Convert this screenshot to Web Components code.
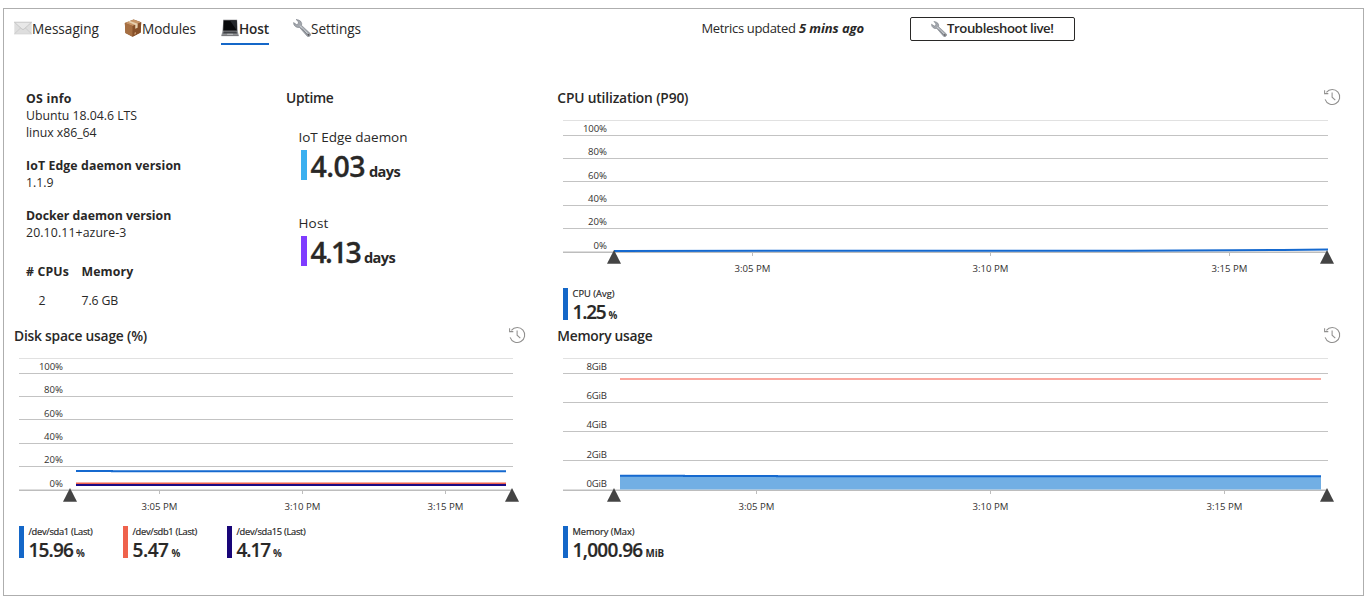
<!DOCTYPE html>
<html lang="en">
<head>
<meta charset="utf-8">
<title>Device details</title>
<style>
html,body{margin:0;background:#fff;overflow:hidden}
body{font-family:"Open Sans","Noto Sans",sans-serif;color:#292827}
</style>
</head>
<body>
<device-page></device-page>

<script>
const define = (name, html, setup) => {
  const t = document.createElement('template');
  t.innerHTML = html;
  customElements.define(name, class extends HTMLElement {
    constructor() {
      super();
      this.attachShadow({ mode: 'open' }).append(t.content.cloneNode(true));
    }
    connectedCallback() { if (setup) setup(this, this.shadowRoot); }
  });
};

// A single-line label tracked so that its text spans the width given in "w".
define('fit-text', `<style>
:host{display:inline-block;white-space:nowrap;flex:none}
span{display:inline-block}
</style><span><slot></slot></span>`, (el, root) => {
  const w = parseFloat(el.getAttribute('w'));
  const span = root.querySelector('span');
  const n = el.textContent.length;
  span.style.letterSpacing = ((w - span.getBoundingClientRect().width) / n).toFixed(3) + 'px';
  el.style.width = w + 'px';
});

const ICONS = {
  mail: `<rect x=".3" y="3" width="17.4" height="12" rx=".6" fill="#dedede"/><path d="M.6 14.7 7 8.6M17.4 14.7 11 8.6" stroke="#c4c4c4" stroke-width=".7" fill="none"/><path d="M.4 3.2 8 10.1q1 .8 2 0L17.6 3.2Z" fill="#e8e8e8" stroke="#bcbcbc" stroke-width=".7"/><path d="M.3 15h17.4" stroke="#cdcdcd" stroke-width=".6"/>`,
  box: `<path d="M.8 4 9.6.5 17.2 3.3 16.7 13.6 8.6 17.7 1.4 14Z" fill="#8d5a35"/><path d="M.8 4 9.6.5 17.2 3.3 8.7 7Z" fill="#c79567"/><path d="M.8 4 8.7 7 8.6 17.7 1.4 14Z" fill="#a66f42"/><path d="M8.7 7 17.2 3.3 16.7 13.6 8.6 17.7Z" fill="#875029"/><path d="M3.8 2.8 5.9 2 13.7 4.8 13.6 8.7 11.2 9.8 11.3 5.9Z" fill="#e6cfae"/><path d="m10.4 13.8 1.6-.8v1.9l-1.6.8z" fill="#c49268"/>`,
  laptop: `<path d="M2.2.8h13.9l.5 11.2H1.6Z" fill="#707174"/><path d="M2.8 1.5h12.7l.3 9.9H2.3Z" fill="#08090b"/><path d="M9 1.5h6.5l.3 9.9Z" fill="#24272b"/><path d="M1.5 12h15.2l1 4.2H.4Z" fill="#8e9093"/><path d="M2.6 12.5h13l.4 1.9H2.1Z" fill="#3f4145"/><path d="M6.3 14.8h5.5l.3 1.2H6Z" fill="#b5b6b8"/><path d="M.4 16.2h17.3v.9H.4Z" fill="#5f6063"/>`,
  wrench: `<path d="M3.1.5 5.7 1.1q2.7 1 3 3.4L8.5 6.4l8.7 8.1q.9 1.4-.3 2.5t-2.6.3L6.5 8.4q-2.3.5-4-.8Q.4 6.2.6 3.6L3.8 5.7 5.6 4.3 5.2 2.5Z" fill="#a3a7ad" stroke="#747981" stroke-width=".6"/><path d="m7 6.7 7.5 7.6" stroke="#d8dbdf" stroke-width="1"/><path d="m9 9.5 5.5 6.4" stroke="#70747b" stroke-width=".7"/><circle cx="15.5" cy="15.8" r=".9" fill="#514c50"/>`,
  history: `<path d="M3.4 4.3A7.5 7.5 0 1 1 2.1 11.4M1.6 2.2V5.6H5.3M9.1 4.4V9.2L12.3 12.2" fill="none" stroke="#908f8e" stroke-width="1.05"/>`
};
define('ui-icon', `<style>:host{display:block;flex:none;width:18px;height:18px}svg{display:block;width:100%;height:100%}</style><svg viewBox="0 0 18 18"></svg>`,
  (el, root) => { root.querySelector('svg').innerHTML = ICONS[el.getAttribute('name')]; });

define('nav-tab', `<style>
:host{display:flex;align-items:center;height:32px;box-sizing:border-box;font-size:13.6px;line-height:20px;border-bottom:2px solid transparent}
:host([active]){border-color:#1467c8;font-weight:600}
::slotted(fit-text){padding-top:2px}
</style><slot></slot>`);

define('live-button', `<style>
:host{display:block}
button{all:unset;box-sizing:border-box;width:165px;height:24px;padding-left:20px;border:1px solid #292827;border-radius:2px;display:flex;align-items:center;font-weight:600;font-size:13.2px;line-height:20px}
ui-icon{width:16px;height:16px;margin-top:-1px}
::slotted(fit-text){padding-bottom:2px}
</style><button><ui-icon name="wrench"></ui-icon><slot></slot></button>`);

define('top-bar', `<style>
:host{display:flex;height:79px;padding-left:10px;box-sizing:border-box}
nav{display:flex;width:687.5px;padding-top:4px;box-sizing:border-box}
nav-tab+nav-tab{margin-left:25px}
nav-tab:last-child{margin-left:24px}
.status{width:208.5px;font-size:13px;line-height:20px;padding-top:9px;box-sizing:border-box;white-space:nowrap}
b{font-weight:700;font-style:italic;margin-left:3.5px}
live-button{padding-top:8px}
</style>
<nav>
<nav-tab><ui-icon name="mail"></ui-icon><fit-text w="67">Messaging</fit-text></nav-tab>
<nav-tab><ui-icon name="box"></ui-icon><fit-text w="54">Modules</fit-text></nav-tab>
<nav-tab active><ui-icon name="laptop"></ui-icon><fit-text w="30">Host</fit-text></nav-tab>
<nav-tab><ui-icon name="wrench"></ui-icon><fit-text w="50">Settings</fit-text></nav-tab>
</nav>
<div class="status"><fit-text w="94">Metrics updated</fit-text><b><fit-text w="65">5 mins ago</fit-text></b></div>
<live-button><fit-text w="106.5">Troubleshoot live!</fit-text></live-button>`);

define('host-facts', `<style>
:host{display:block;width:272px;padding:2px 0 0 12px;box-sizing:border-box;font-size:12.3px;line-height:17px}
b{font-weight:700}
dl,dt,dd{margin:0}
dt,dd{height:17px}
.gap{margin-top:16px}
fit-text{vertical-align:top}
.t{display:grid;grid-template-columns:55.5px auto;grid-template-rows:17px 17px;row-gap:12px;margin-top:22px;justify-items:start}
.n{margin-left:12.5px}
</style>
<dl>
<dt><b><fit-text w="45.5">OS info</fit-text></b></dt>
<dd><fit-text w="111">Ubuntu 18.04.6 LTS</fit-text></dd><dd><fit-text w="70.5">linux x86_64</fit-text></dd>
<dt class="gap"><b><fit-text w="155.3">IoT Edge daemon version</fit-text></b></dt><dd><fit-text w="27.5">1.1.9</fit-text></dd>
<dt class="gap"><b><fit-text w="145.2">Docker daemon version</fit-text></b></dt><dd><fit-text w="100.5">20.10.11+azure-3</fit-text></dd>
</dl>
<div class="t"><b><fit-text w="43">#&nbsp;CPUs</fit-text></b><b><fit-text w="51.8">Memory</fit-text></b>
<fit-text class="n" w="8">2</fit-text><fit-text w="36.5">7.6 GB</fit-text></div>`);

define('uptime-stat', `<style>
:host{display:block;height:86px;font-size:13.5px;line-height:20px}
.n{display:flex;align-items:baseline;height:30px;margin:3px 0 0 2.5px;border-left:6px solid var(--tone);padding-left:3.5px;font-weight:600;font-size:28.5px;line-height:32px;-webkit-text-stroke:.3px}
.u{font-size:14.6px;font-weight:700;margin-left:4px;-webkit-text-stroke:0}
</style><slot name="label"></slot>
<div class="n"><slot></slot><fit-text class="u" w="31">days</fit-text></div>`);

define('uptime-panel', `<style>
:host{display:block}
h2{margin:0;font-size:13.8px;line-height:20px;font-weight:600}
.s{padding:19px 0 0 12.5px}
</style><h2><fit-text w="47.5">Uptime</fit-text></h2>
<div class="s">
<uptime-stat style="--tone:#3bb0f0"><fit-text slot="label" w="109">IoT Edge daemon</fit-text><fit-text w="54.5">4.03</fit-text></uptime-stat>
<uptime-stat style="--tone:#7f3cff"><fit-text slot="label" w="30">Host</fit-text><fit-text w="49.5">4.13</fit-text></uptime-stat>
</div>`);

define('chart-legend', `<style>
:host{display:block;width:104px;height:32px;border-left:5px solid var(--tone);padding-left:4.5px;box-sizing:border-box;white-space:nowrap}
.l{font-size:9.3px;line-height:12px;height:12px;font-weight:500;-webkit-text-stroke:.2px}
.v{display:flex;align-items:baseline;font-size:19px;line-height:24px;font-weight:600;-webkit-text-stroke:.2px}
.u{font-size:9.8px;margin-left:3px;font-weight:700;-webkit-text-stroke:0}
.l fit-text{vertical-align:top}
</style><div class="l"></div><div class="v"></div>`, (el, root) => {
  const a = k => el.getAttribute(k);
  root.querySelector('.l').innerHTML = `<fit-text w="${a('lw')}">${a('label')}</fit-text>`;
  root.querySelector('.v').innerHTML = `<fit-text w="${a('vw')}">${a('value')}</fit-text><fit-text class="u" w="${a('uw')}">${a('unit')}</fit-text>`;
});

// Each chart: plot right edge, y ticks [label, label baseline, rule y], x ticks, marker positions, series.
const PCT = [['100%',24,27.5],['80%',47,50.5],['60%',71,73.5],['40%',94,97.5],['20%',117,120.5],['0%',141,null]];
const GIB = [['8GiB',24,27.5],['6GiB',53,56.5],['4GiB',82,85.5],['2GiB',112,114.5],['0GiB',141,null]];
const line = (pts, color, w = 2) => `<polyline points="${pts}" fill="none" stroke="${color}" stroke-width="${w}"/>`;
const CHARTS = {
  cpu: { right: 770, y: PCT, x: [194.5, 432.5, 671.5], marks: [56, 769],
    draw: line('56,142.9 573,142.8 622,142.5 674,142.2 725,141.9 770,141.5', '#1569cf') },
  disk: { right: 499, y: PCT, x: [145.5, 288.5, 431.5], marks: [56, 498],
    draw: line('62,125 98,125 98,125.3 492,125.3', '#1569cf') + line('62,137.5 492,137.5', '#f0624d') + line('62,139 492,139', '#1b0a85') },
  memory: { right: 770, y: GIB, x: [198.5, 432.5, 666.5], marks: [56, 769],
    draw: '<path d="M62 130H763V143.5H62Z" fill="#72afe4"/>' + line('62,129.7 126,129.7 126,130 219,130 219,130.3 763,130.3', '#1569cf') + line('62,33 763,33', '#fba79e') }
};
const TEXT_W = { '100%': 24, '0%': 13.5, '8GiB': 20.5, '6GiB': 20.5, '4GiB': 20.5, '2GiB': 20.5, '0GiB': 20.5 };

define('metric-chart', `<style>
:host{display:block}
header{display:flex;justify-content:space-between;width:var(--w);height:20px}
h2{margin:0 0 0 var(--nudge,0);font-size:13.8px;line-height:20px;font-weight:600}
ui-icon{width:18px;height:18px}
svg{display:block;width:790px;height:170px;overflow:visible}
text{font-size:9.6px;fill:#333130}
footer{display:flex;margin:10px 0 0 5px}
</style>
<header><h2><slot name="title"></slot></h2><ui-icon name="history"></ui-icon></header>
<svg viewBox="0 0 790 170"></svg>
<footer><slot></slot></footer>`, (el, root) => {
  const c = CHARTS[el.getAttribute('kind')];
  const svg = root.querySelector('svg');
  if (c.right < 600) { svg.style.width = '520px'; svg.setAttribute('viewBox', '0 0 520 170'); }
  const rule = (y, col) => `<path d="M5 ${y}H${c.right}" stroke="${col}"/>`;
  svg.innerHTML = rule(12.5, '#e1e1e1')
    + c.y.map(([t, b, r]) => (r ? rule(r, '#c3c3c3') : '')
      + `<text x="49" y="${b}" text-anchor="end" textLength="${TEXT_W[t] || 19}">${t}</text>`).join('')
    + rule(143.5, '#dedede') + rule(144.5, '#bdbdbd')
    + c.x.map((x, i) => `<path d="M${x} 145V148" stroke="#bdbdbd"/><text x="${x}" y="164" text-anchor="middle" textLength="36">${['3:05 PM', '3:10 PM', '3:15 PM'][i]}</text>`).join('')
    + c.draw
    + c.marks.map(x => `<path d="M${x} 142 ${x + 7} 155.8H${x - 7}Z" fill="#444"/>`).join('');
});

define('device-page', `<style>
:host{display:block;box-sizing:border-box;width:1361px;height:588px;margin:8px 0 0 3px;border:1px solid #aeaeae}
main{display:grid;grid-template-columns:544px 1fr;grid-template-rows:238px 238px;padding-left:10px}
.info{display:flex}
.wide{--w:782.5px;--nudge:-.7px}.half{--w:511.5px}
metric-chart{min-width:0}
</style>
<top-bar></top-bar>
<main>
<section class="info"><host-facts></host-facts><uptime-panel></uptime-panel></section>
<metric-chart class="wide" kind="cpu"><fit-text slot="title" w="131">CPU utilization (P90)</fit-text>
<chart-legend style="--tone:#1467c8" label="CPU (Avg)" lw="42" value="1.25" vw="33" unit="%" uw="8.5"></chart-legend></metric-chart>
<metric-chart class="half" kind="disk"><fit-text slot="title" w="133">Disk space usage (%)</fit-text>
<chart-legend style="--tone:#1467c8" label="/dev/sda1 (Last)" lw="64" value="15.96" vw="44.5" unit="%" uw="8.5"></chart-legend>
<chart-legend style="--tone:#ef624c" label="/dev/sdb1 (Last)" lw="64.5" value="5.47" vw="36" unit="%" uw="8.5"></chart-legend>
<chart-legend style="--tone:#180578" label="/dev/sda15 (Last)" lw="69" value="4.17" vw="33.5" unit="%" uw="8.5"></chart-legend></metric-chart>
<metric-chart class="wide" kind="memory"><fit-text slot="title" w="95">Memory usage</fit-text>
<chart-legend style="--tone:#1467c8" label="Memory (Max)" lw="62" value="1,000.96" vw="70" unit="MiB" uw="18.5"></chart-legend></metric-chart>
</main>`);
</script>
</body>
</html>
